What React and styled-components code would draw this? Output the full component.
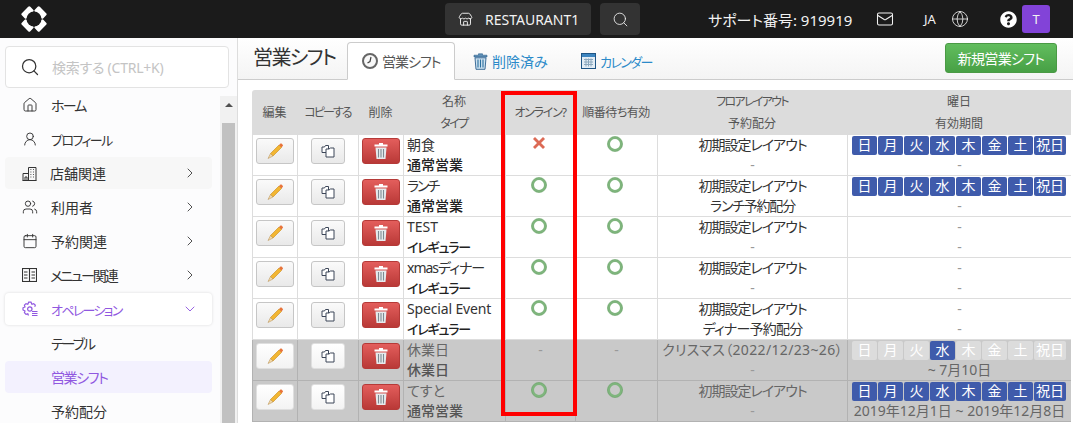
import React from 'react';
import styled, { createGlobalStyle } from 'styled-components';
import {
  Search, House, UserRound, Users, Calendar,
  ChevronRight, ChevronDown, Store, Mail, Globe,
} from 'lucide-react';
import { FaQuestionCircle } from 'react-icons/fa';

const GlobalStyle = createGlobalStyle`
  html, body { margin: 0; padding: 0; height: 100%; overflow: hidden; }
  body {
    font-family: "Noto Sans", "Noto Sans CJK JP", sans-serif;
    font-feature-settings: "palt";
    color: #333;
    background: #fff;
  }
  * { box-sizing: border-box; }
`;

const Page = styled.div`
  width: 1073px;
  height: 423px;
  display: flex;
  flex-direction: column;
  overflow: hidden;
`;

const TopBar = styled.header`
  height: 38px;
  flex: none;
  background: #1b1b1b;
  color: #f2f2f2;
  display: flex;
  align-items: center;
  padding-left: 21px;
  padding-right: 23px;
`;

const TopRight = styled.div`
  margin-left: auto;
  display: flex;
  align-items: center;
`;

const StoreChip = styled.div`
  width: 146px;
  height: 32px;
  background: #333;
  border-radius: 4px;
  display: flex;
  align-items: center;
  gap: 12px;
  padding-left: 13px;
  font-size: 14px;
  margin-right: 9px;
`;

const SearchChip = styled.div`
  width: 40px;
  height: 32px;
  background: #333;
  border-radius: 4px;
  display: flex;
  align-items: center;
  justify-content: center;
`;

const Support = styled.span`
  width: 150px;
  font-size: 15px;
  white-space: nowrap;
  margin-left: 68px;
  margin-right: 18px;
`;

const Lang = styled.span`
  font-size: 13px;
  margin-left: 30px;
  margin-right: 11px;
  width: 16px;
`;

const HelpIcon = styled(FaQuestionCircle)`
  margin-left: 31px;
  color: #fff;
`;

const Avatar = styled.div`
  width: 28px;
  height: 28px;
  background: #8243d8;
  border-radius: 3px;
  margin-left: 5px;
  font-size: 13px;
  display: flex;
  align-items: center;
  justify-content: center;
`;

const Body = styled.div`
  flex: 1;
  display: flex;
  min-height: 0;
`;

const Sidebar = styled.aside`
  width: 238px;
  flex: none;
  background: #fcfcfd;
  border-right: 1px solid #ddd;
  padding: 8px 0 0 5px;
  position: relative;
`;

const SearchBox = styled.div`
  width: 224px;
  height: 42px;
  background: #fff;
  border: 1px solid #e3e3e3;
  border-radius: 4px;
  display: flex;
  align-items: center;
  padding-left: 14px;
  gap: 12px;
  font-size: 14px;
  letter-spacing: -0.25px;
  color: #c4c4c4;
`;

const NavList = styled.nav`
  width: 207px;
  margin-top: 1px;
  display: flex;
  flex-direction: column;
  gap: 2px;
`;

const NavItem = styled.div`
  height: 32px;
  display: flex;
  align-items: center;
  gap: 13px;
  padding-left: ${(p) => (p.$sub ? '46px' : '17px')};
  padding-right: 14px;
  font-size: 14px;
  border-radius: 4px;
  color: ${(p) => (p.$open || p.$current ? '#9058e0' : '#333')};
  background: ${(p) => (p.$current ? '#f3f1fe' : p.$hover ? '#f7f7f7' : p.$open ? '#fff' : 'transparent')};
  box-shadow: ${(p) => (p.$open ? '0 0 3px rgba(0,0,0,.14)' : 'none')};
  svg { flex: none; }
`;

const Tracked = styled.span`
  letter-spacing: ${(p) => p.$track || 0}px;
  font-size: ${(p) => (p.$size ? `${p.$size}px` : 'inherit')};
`;

const NavArrow = styled.span`
  margin-left: auto;
  display: flex;
  color: #444;
`;

const OpenArrow = styled(NavArrow)`
  color: #9058e0;
`;

const ScrollBar = styled.div`
  position: absolute;
  right: 0;
  top: 58px;
  bottom: 0;
  width: 17px;
  background: #f1f1f1;
  display: flex;
  flex-direction: column;
  align-items: center;
`;

const ScrollUp = styled.div`
  margin-top: 7px;
  width: 0;
  height: 0;
  border-left: 4px solid transparent;
  border-right: 4px solid transparent;
  border-bottom: 4px solid #505050;
`;

const ScrollThumb = styled.div`
  margin-top: 16px;
  width: 13px;
  flex: 1;
  background: #c1c1c1;
`;

const Main = styled.main`
  flex: 1;
  min-width: 0;
  position: relative;
`;

const TitleBar = styled.div`
  height: 42px;
  background: linear-gradient(#fff, #f4f4f4);
  border-bottom: 1px solid #ccc;
  display: flex;
  align-items: flex-end;
  padding-left: 15px;
  padding-right: 16px;
`;

const Title = styled.h1`
  margin: 0 10px 9px 0;
  font-size: 20px;
  line-height: 24px;
  font-weight: 400;
  letter-spacing: -1.6px;
  color: #333;
  width: 84px;
  white-space: nowrap;
`;

const Tab = styled.div`
  height: ${(p) => (p.$active ? '38px' : '36px')};
  margin-bottom: ${(p) => (p.$active ? '-1px' : '0')};
  display: flex;
  align-items: center;
  gap: 4px;
  width: ${(p) => p.$w}px;
  padding-left: ${(p) => (p.$active ? '14px' : '18px')};
  font-size: 14px;
  white-space: nowrap;
  color: ${(p) => (p.$active ? '#555' : '#2b8ac9')};
  background: ${(p) => (p.$active ? '#fff' : 'transparent')};
  border: ${(p) => (p.$active ? '1px solid #ccc' : 'none')};
  border-bottom: ${(p) => (p.$active ? '1px solid #fff' : 'none')};
  border-radius: 4px 4px 0 0;
  svg { flex: none; }
`;

const NewButton = styled.button`
  margin-left: auto;
  margin-bottom: 6px;
  width: 112px;
  height: 30px;
  border: 1px solid #4a9a45;
  border-radius: 3px;
  background: linear-gradient(#62bd5e, #47a045);
  color: #fff;
  font: inherit;
  font-size: 14px;
  letter-spacing: -0.7px;
  padding: 0;
`;

const TableWrap = styled.div`
  padding: 10px 0 0 14px;
  width: 1100px;
`;

const Table = styled.table`
  border-collapse: separate;
  border-spacing: 0;
  table-layout: fixed;
  width: 819px;
  font-size: 14px;
  line-height: 20px;
  color: #333;

  col:nth-child(1) { width: 45px; }
  col:nth-child(2) { width: 61px; }
  col:nth-child(3) { width: 45px; }
  col:nth-child(4) { width: 102px; }
  col:nth-child(5) { width: 70px; }
  col:nth-child(6) { width: 82px; }
  col:nth-child(7) { width: 190px; }
  col:nth-child(8) { width: 224px; }
`;

const HeadCell = styled.th`
  height: 45px;
  padding: 0;
  background: #dcdcdc;
  color: #555;
  font-size: 12px;
  font-weight: 400;
  line-height: 22px;
  text-align: center;
  white-space: nowrap;
  &:first-child { border-top-left-radius: 3px; }
`;

const Row = styled.tr`
  background: ${(p) => (p.$off ? '#c9c9c9' : '#fff')};
  color: ${(p) => (p.$off ? '#666' : '#333')};
  --cell-line: ${(p) => (p.$off ? '#b2b2b2' : '#ddd')};
  --btn-border: ${(p) => (p.$off ? '#dfdfdf' : '#c6c6c6')};
  --btn-bg: ${(p) => (p.$off ? 'linear-gradient(#fff, #f3f3f3)' : 'linear-gradient(#fafafa, #e9e9e9)')};
`;

const Cell = styled.td`
  height: 41px;
  padding: 0;
  vertical-align: top;
  text-align: ${(p) => (p.$left ? 'left' : 'center')};
  padding-left: ${(p) => (p.$left ? '3px' : '0')};
  border-left: 1px solid var(--cell-line);
  border-bottom: 1px solid var(--cell-line);
  white-space: nowrap;
  overflow: hidden;
`;

const ActionCell = styled(Cell)`
  padding-top: 3px;
`;

const ActionBtn = styled.button`
  height: 26px;
  width: ${(p) => p.$w}px;
  padding: 0;
  display: inline-flex;
  align-items: center;
  justify-content: center;
  vertical-align: top;
  border-radius: 3px;
  border: 1px solid var(--btn-border);
  background: var(--btn-bg);
`;

const DeleteBtn = styled(ActionBtn)`
  border: 1px solid #b53a38;
  background: linear-gradient(#e35e5c, #b93937);
`;

const Kind = styled.div`
  height: 20px;
  font-weight: 500;
  font-size: ${(p) => p.$size || 14}px;
  letter-spacing: ${(p) => p.$track || 0}px;
  color: ${(p) => (p.$off ? '#555' : '#222')};
`;

const Line = styled.div`
  height: 20px;
  letter-spacing: ${(p) => p.$track || 0}px;
`;

const Dash = styled(Line)`
  color: #999;
`;

const StatusMark = styled.div`
  height: 20px;
  padding: 1px 3px 0 0;
  display: flex;
  justify-content: center;
`;

const Days = styled.div`
  display: flex;
  gap: 1px;
  padding: 1px 0 0 4px;
  height: 20px;
`;

const Day = styled.span`
  width: ${(p) => (p.$wide ? '32px' : '25px')};
  height: 19px;
  line-height: 18px;
  border-radius: 2px;
  font-size: 14px;
  color: #fff;
  background: ${(p) => (p.$on ? '#3f5bab' : '#dcdcdc')};
`;

const Highlight = styled.div`
  position: absolute;
  left: 263px;
  top: 53px;
  width: 76px;
  height: 325px;
  border: 4px solid #f00;
  pointer-events: none;
`;

const Logo = () => (
  <svg width="26" height="26" viewBox="0 0 26 26">
    <g fill="#fff">
      <rect x="0.500" y="3" width="12" height="7" rx="1.500" transform="rotate(-45 6.500 6.500)" />
      <rect x="13.500" y="3" width="12" height="7" rx="1.500" transform="rotate(45 19.500 6.500)" />
      <rect x="0.500" y="16" width="12" height="7" rx="1.500" transform="rotate(45 6.500 19.500)" />
      <rect x="13.500" y="16" width="12" height="7" rx="1.500" transform="rotate(-45 19.500 19.500)" />
    </g>
    <circle cx="13" cy="13" r="7.500" fill="#1b1b1b" />
  </svg>
);

const ShopIcon = () => (
  <svg width="15" height="15" viewBox="0 0 15 15" fill="none" stroke="#333" strokeWidth="1">
    <path d="M.5 14.500h14M1 14.500V7.500H6.500" />
    <path d="M3 14.500v-3.500h2v3.500" />
    <path d="M6.500 14.500V1.500h7.500v13" />
    <path d="M8.500 3.500h.8M11 3.500h.8M8.500 6h.8M11 6h.8M8.500 8.500h.8M11 8.500h.8M8.500 11h.8M11 11h.8" strokeWidth="1.200" />
  </svg>
);

const MenuIcon = () => (
  <svg width="15" height="14" viewBox="0 0 15 14" fill="none" stroke="#333" strokeWidth="1.100">
    <rect x=".5" y=".5" width="14" height="13" />
    <path d="M7.500 .5v13M2 4h3.500M2 7h3.500M2 10h3.500M9.500 4h3.500M9.500 7h3.500M9.500 10h3.500" />
  </svg>
);

const GearIcon = () => (
  <svg width="16" height="16" viewBox="0 0 16 16" fill="none" stroke="#9058e0" strokeWidth="1.200">
    <path d="M6.500 14.500 5.800 12.800 4 13.300 2.400 11.600 3 10 1 9V6.800L3 6 2.400 4.200 4 2.600 5.800 3.200 6.700 1.200H9L9.900 3.200 11.700 2.600 13.300 4.200 12.700 5.800" />
    <circle cx="7.800" cy="8" r="2.200" />
    <path d="M10 10.500h5.500M10 12.500h5.500M10 14.500h5.500" />
  </svg>
);

const Pencil = () => (
  <svg width="18" height="18" viewBox="0 0 18 18">
    <path d="M4.500 11.500 13 3l2.500 2.500L7 14Z" fill="#f2b632" stroke="#c98a1a" strokeWidth=".6" />
    <path d="M13 3l1.300-1.300a1 1 0 0 1 1.400 0l1 1a1 1 0 0 1 0 1.400L15.500 5.500Z" fill="#e8743b" />
    <path d="M4.500 11.500 7 14 2 16.500Z" fill="#f3d9a8" stroke="#b58a4a" strokeWidth=".5" />
  </svg>
);

const Copy = () => (
  <svg width="14" height="14" viewBox="0 0 14 14" fill="#fff" stroke="#3c4658" strokeWidth="1">
    <path d="M1 3h2.500l1-1.500h3V8.500H1Z" />
    <path d="M5 5h3l1.500-1H13v9H5Z" />
  </svg>
);

const Trash = () => (
  <svg width="16" height="18" viewBox="0 0 16 18">
    <path d="M6 1h4v1.500h4.500V4.500H1.500V2.500H6Z" fill="#fff" />
    <path d="M2.500 5.500h11l-1 11.500h-9Z" fill="#e6ebee" />
    <path d="M5.500 7v8.500M8 7v8.500M10.500 7v8.500" stroke="#7d8a92" strokeWidth="1.100" />
  </svg>
);

const BlueTrash = () => (
  <svg width="15" height="17" viewBox="0 0 15 17">
    <path d="M5.500.8h4v1.400h4.500V4H1V2.200h4.500Z" fill="#5f8fb5" stroke="#2a5f8f" strokeWidth=".6" />
    <path d="M2 4.800h11l-1 11.500H3Z" fill="#cfe3f0" stroke="#2a5f8f" strokeWidth=".9" />
    <path d="M5 6.500v8M7.500 6.500v8M10 6.500v8" stroke="#2a6f9f" strokeWidth="1.100" />
  </svg>
);

const Clock = () => (
  <svg width="16" height="16" viewBox="0 0 16 16">
    <circle cx="8" cy="8" r="7" fill="#f8f8f8" stroke="#666" strokeWidth="2" />
    <path d="M9 4 8 8.500 5.500 10" fill="none" stroke="#444" strokeWidth="1.200" />
  </svg>
);

const CalendarIcon = () => (
  <svg width="15" height="16" viewBox="0 0 15 16">
    <rect x=".5" y=".5" width="14" height="15" fill="#e3edf5" stroke="#1f5585" />
    <rect x="1" y="1" width="13" height="3" fill="#3d85c0" />
    <path d="M3 6.500h9M3 9h9M3 11.500h9M5 5.500v8M7.500 5.500v8M10 5.500v8" stroke="#8aa7bd" strokeWidth="1" />
  </svg>
);

const Ok = () => (
  <svg width="16" height="16" viewBox="0 0 16 16">
    <circle cx="8" cy="8" r="6.300" fill="none" stroke="#7fb57d" strokeWidth="2.600" />
    <circle cx="8" cy="8" r="7.600" fill="none" stroke="#5d9a5b" strokeWidth=".5" />
  </svg>
);

const No = () => (
  <svg width="14" height="14" viewBox="0 0 14 14">
    <path d="M3 1l4 4 4-4 2 2-4 4 4 4-2 2-4-4-4 4-2-2 4-4-4-4Z" fill="#dc6a55" />
  </svg>
);

const dayNames = ['日', '月', '火', '水', '木', '金', '土', '祝日'];

const irregular = { kind: 'イレギュラー', kindTrack: -1.2, kindSize: 13 };

const rows = [
  { name: '朝食', kind: '通常営業', online: 'no', wait: 'ok', layout: '初期設定レイアウト', plan: '-', days: 'all', period: '-' },
  { name: 'ランチ', nameTrack: -2, kind: '通常営業', online: 'ok', wait: 'ok', layout: '初期設定レイアウト', plan: 'ランチ予約配分', planTrack: -1.2, days: 'all', period: '-' },
  { name: 'TEST', ...irregular, online: 'ok', wait: 'ok', layout: '初期設定レイアウト', plan: '-', period: '-' },
  { name: 'xmasディナー', nameTrack: -1, ...irregular, online: 'ok', wait: 'ok', layout: '初期設定レイアウト', plan: '-', period: '-' },
  { name: 'Special Event', nameTrack: -0.15, ...irregular, online: 'ok', wait: 'ok', layout: '初期設定レイアウト', plan: 'ディナー予約配分', planTrack: -0.8, period: '-' },
  { name: '休業日', kind: '休業日', off: true, online: '-', wait: '-', layout: 'クリスマス（2022/12/23~26）', layoutTrack: 0.35, plan: '-', days: 'wed', period: '~ 7月10日' },
  { name: 'てすと', kind: '通常営業', off: true, online: 'ok', wait: 'ok', layout: '初期設定レイアウト', plan: '-', days: 'all', period: '2019年12月1日 ~ 2019年12月8日' },
];

const Mark = ({ value }) => {
  if (value === 'ok') return <StatusMark><Ok /></StatusMark>;
  if (value === 'no') return <StatusMark><No /></StatusMark>;
  return <Dash>-</Dash>;
};

const Text = ({ value, track }) => (value === '-' ? <Dash>-</Dash> : <Line $track={track}>{value}</Line>);

const navTop = [
  { label: 'ホーム', track: -1.8, icon: <House size={16} strokeWidth={1.4} /> },
  { label: 'プロフィール', track: -1.6, size: 13, icon: <UserRound size={16} strokeWidth={1.4} /> },
  { label: '店舗関連', icon: <ShopIcon />, arrow: true, hover: true },
  { label: '利用者', icon: <Users size={16} strokeWidth={1.4} />, arrow: true },
  { label: '予約関連', icon: <Calendar size={16} strokeWidth={1.4} />, arrow: true },
  { label: 'メニュー関連', track: -2, icon: <MenuIcon />, arrow: true },
];

export default function App() {
  return (
    <Page>
      <GlobalStyle />
      <TopBar>
        <Logo />
        <TopRight>
          <StoreChip><Store size={15} strokeWidth={1.5} />RESTAURANT1</StoreChip>
          <SearchChip><Search size={17} strokeWidth={1.2} /></SearchChip>
          <Support>サポート番号: 919919</Support>
          <Mail size={18} strokeWidth={1.4} />
          <Lang>JA</Lang>
          <Globe size={18} strokeWidth={1.1} />
          <HelpIcon size={17} />
          <Avatar>T</Avatar>
        </TopRight>
      </TopBar>
      <Body>
        <Sidebar>
          <SearchBox><Search size={20} strokeWidth={1.5} color="#333" />検索する (CTRL+K)</SearchBox>
          <NavList>
            {navTop.map(({ label, track, size, icon, arrow, hover }) => (
              <NavItem key={label} $hover={hover}>
                {icon}
                <Tracked $track={track} $size={size}>{label}</Tracked>
                {arrow && <NavArrow><ChevronRight size={16} strokeWidth={1.4} /></NavArrow>}
              </NavItem>
            ))}
            <NavItem $open>
              <GearIcon />
              <Tracked $track={-1.7} $size={13}>オペレーション</Tracked>
              <OpenArrow><ChevronDown size={16} strokeWidth={1.4} /></OpenArrow>
            </NavItem>
            <NavItem $sub><Tracked $track={-2}>テーブル</Tracked></NavItem>
            <NavItem $sub $current><Tracked $track={-1.4}>営業シフト</Tracked></NavItem>
            <NavItem $sub>予約配分</NavItem>
          </NavList>
          <ScrollBar><ScrollUp /><ScrollThumb /></ScrollBar>
        </Sidebar>
        <Main>
          <TitleBar>
            <Title>営業シフト</Title>
            <Tab $active $w={108}><Clock /><Tracked $track={-1}>営業シフト</Tracked></Tab>
            <Tab $w={108}><BlueTrash />削除済み</Tab>
            <Tab $w={90}><CalendarIcon /><Tracked $track={-1.6} $size={13}>カレンダー</Tracked></Tab>
            <NewButton>新規営業シフト</NewButton>
          </TitleBar>
          <TableWrap>
            <Table>
              <colgroup><col /><col /><col /><col /><col /><col /><col /><col /></colgroup>
              <thead>
                <tr>
                  <HeadCell>編集</HeadCell>
                  <HeadCell><Tracked $track={-2}>コピーする</Tracked></HeadCell>
                  <HeadCell>削除</HeadCell>
                  <HeadCell>名称<br /><Tracked $track={-1.5}>タイプ</Tracked></HeadCell>
                  <HeadCell><Tracked $track={-1.2}>オンライン?</Tracked></HeadCell>
                  <HeadCell><Tracked $track={-0.5}>順番待ち有効</Tracked></HeadCell>
                  <HeadCell><Tracked $track={-1.7}>フロアレイアウト</Tracked><br />予約配分</HeadCell>
                  <HeadCell>曜日<br />有効期間</HeadCell>
                </tr>
              </thead>
              <tbody>
                {rows.map((r) => (
                  <Row key={r.name} $off={r.off}>
                    <ActionCell><ActionBtn $w={38}><Pencil /></ActionBtn></ActionCell>
                    <ActionCell><ActionBtn $w={34}><Copy /></ActionBtn></ActionCell>
                    <ActionCell><DeleteBtn $w={38}><Trash /></DeleteBtn></ActionCell>
                    <Cell $left>
                      <Line $track={r.nameTrack}>{r.name}</Line>
                      <Kind $off={r.off} $track={r.kindTrack} $size={r.kindSize}>{r.kind}</Kind>
                    </Cell>
                    <Cell><Mark value={r.online} /></Cell>
                    <Cell><Mark value={r.wait} /></Cell>
                    <Cell>
                      <Line $track={r.layoutTrack ?? -1}>{r.layout}</Line>
                      <Text value={r.plan} track={r.planTrack} />
                    </Cell>
                    <Cell>
                      {r.days ? (
                        <Days>
                          {dayNames.map((d) => (
                            <Day key={d} $wide={d === '祝日'} $on={r.days === 'all' || d === '水'}>{d}</Day>
                          ))}
                        </Days>
                      ) : <Dash>-</Dash>}
                      <Text value={r.period} />
                    </Cell>
                  </Row>
                ))}
              </tbody>
            </Table>
          </TableWrap>
          <Highlight />
        </Main>
      </Body>
    </Page>
  );
}
